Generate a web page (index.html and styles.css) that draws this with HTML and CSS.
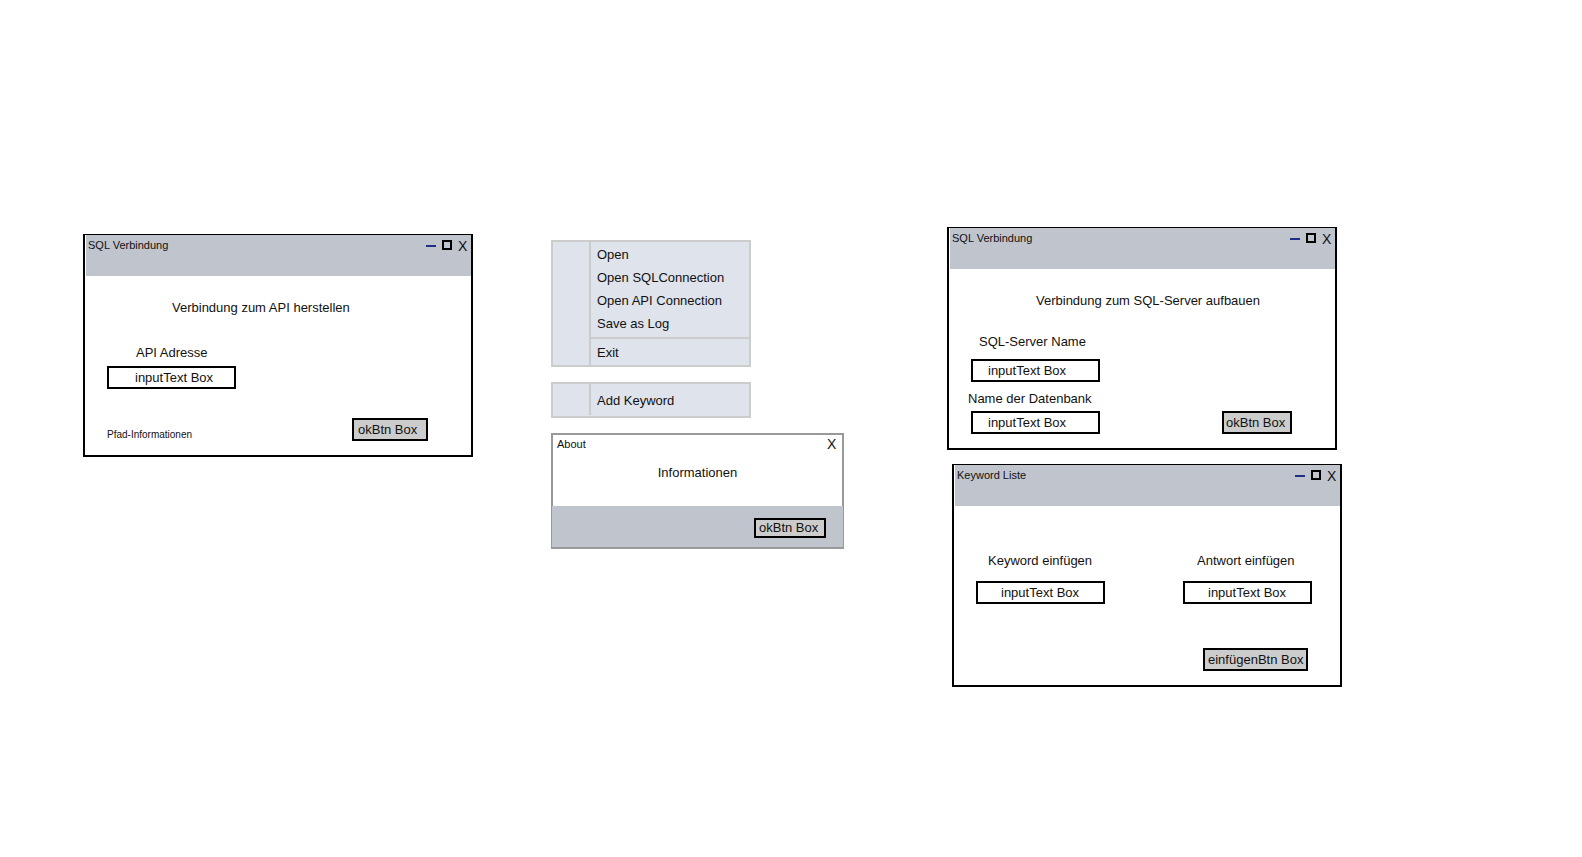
FILE: index.html
```html
<!DOCTYPE html>
<html lang="de">
<head>
<meta charset="utf-8">
<title>Mockups</title>
<link rel="stylesheet" href="styles.css">
</head>
<body>
<main class="canvas">

  <section class="window window-api">
    <header class="titlebar">
      <h2 class="title">SQL Verbindung</h2>
      <div class="controls">
        <button class="control" aria-label="Minimieren"><svg width="10" height="12" viewBox="0 0 10 12"><path d="M0 6H10" stroke="#1d2f86" stroke-width="2"/></svg></button>
        <button class="control" aria-label="Maximieren"><svg width="10" height="12" viewBox="0 0 10 12"><path d="M1 1H9V9H1Z" fill="none" stroke="#000" stroke-width="2"/></svg></button>
        <button class="control close" aria-label="Schließen">X</button>
      </div>
    </header>
    <form class="body">
      <p class="heading">Verbindung zum API herstellen</p>
      <label class="label-api" for="api">API Adresse</label>
      <input class="field" id="api" type="text" value="inputText Box">
      <div class="footer">
        <span class="hint">Pfad-Informationen</span>
        <button class="action" type="button">okBtn Box</button>
      </div>
    </form>
  </section>

  <nav class="menu menu-file">
    <div class="gutter"></div>
    <div class="entries">
      <button class="entry">Open</button>
      <button class="entry">Open SQLConnection</button>
      <button class="entry">Open API Connection</button>
      <button class="entry">Save as Log</button>
      <hr class="separator">
      <button class="entry">Exit</button>
    </div>
  </nav>

  <nav class="menu menu-keyword">
    <div class="gutter"></div>
    <div class="entries">
      <button class="entry">Add Keyword</button>
    </div>
  </nav>

  <section class="about">
    <header class="about-head">
      <h2 class="title">About</h2>
      <button class="control close" aria-label="Schließen">X</button>
    </header>
    <p class="about-text">Informationen</p>
    <footer class="about-footer">
      <button class="action" type="button">okBtn Box</button>
    </footer>
  </section>

  <section class="window window-sql">
    <header class="titlebar">
      <h2 class="title">SQL Verbindung</h2>
      <div class="controls">
        <button class="control" aria-label="Minimieren"><svg width="10" height="12" viewBox="0 0 10 12"><path d="M0 6H10" stroke="#1d2f86" stroke-width="2"/></svg></button>
        <button class="control" aria-label="Maximieren"><svg width="10" height="12" viewBox="0 0 10 12"><path d="M1 1H9V9H1Z" fill="none" stroke="#000" stroke-width="2"/></svg></button>
        <button class="control close" aria-label="Schließen">X</button>
      </div>
    </header>
    <form class="body">
      <p class="heading">Verbindung zum SQL-Server aufbauen</p>
      <label class="label-server" for="server">SQL-Server Name</label>
      <input class="field" id="server" type="text" value="inputText Box">
      <label class="label-db" for="db">Name der Datenbank</label>
      <div class="footer">
        <input class="field" id="db" type="text" value="inputText Box">
        <button class="action" type="button">okBtn Box</button>
      </div>
    </form>
  </section>

  <section class="window window-list">
    <header class="titlebar">
      <h2 class="title">Keyword Liste</h2>
      <div class="controls">
        <button class="control" aria-label="Minimieren"><svg width="10" height="12" viewBox="0 0 10 12"><path d="M0 6H10" stroke="#1d2f86" stroke-width="2"/></svg></button>
        <button class="control" aria-label="Maximieren"><svg width="10" height="12" viewBox="0 0 10 12"><path d="M1 1H9V9H1Z" fill="none" stroke="#000" stroke-width="2"/></svg></button>
        <button class="control close" aria-label="Schließen">X</button>
      </div>
    </header>
    <form class="body">
      <div class="pair">
        <div class="column">
          <label class="label-keyword" for="keyword">Keyword einfügen</label>
          <input class="field" id="keyword" type="text" value="inputText Box">
        </div>
        <div class="column">
          <label class="label-answer" for="answer">Antwort einfügen</label>
          <input class="field" id="answer" type="text" value="inputText Box">
        </div>
      </div>
      <div class="footer">
        <button class="action" type="button">einfügenBtn Box</button>
      </div>
    </form>
  </section>

</main>
</body>
</html>
```

FILE: styles.css
```css
* {
  box-sizing: border-box;
}

body {
  margin: 0;
  background: #fff;
  color: #111;
  font: 13px/16px "Liberation Sans", Arial, sans-serif;
}

h2,
p {
  margin: 0;
}

button,
input {
  margin: 0;
  padding: 0;
  border: 0;
  border-radius: 0;
  background: none;
  color: inherit;
  font: inherit;
}

.canvas {
  position: relative;
  min-height: 100vh;
}

.window,
.menu,
.about {
  position: absolute;
}

/* windows */

.window {
  width: 390px;
  border: 2px solid #000;
  border-top-width: 1px;
  background: #fff;
}

.window-api {
  left: 83px;
  top: 234px;
}

.window-sql {
  left: 947px;
  top: 227px;
}

.window-list {
  left: 952px;
  top: 464px;
}

.titlebar {
  display: flex;
  justify-content: space-between;
  align-items: flex-start;
  height: 41px;
  margin-left: 1px;
  padding: 2px 4px 0 2px;
  background: #c0c4cc;
}

.title {
  font-size: 11px;
  font-weight: normal;
}

.controls {
  display: flex;
  align-items: center;
  gap: 6px;
  padding-top: 1px;
}

.control svg {
  display: block;
}

.close {
  width: 9px;
  font-size: 14px;
}

.body {
  display: flex;
  flex-direction: column;
  align-items: flex-start;
  padding: 24px 43px 14px 22px;
}

.heading {
  margin-left: 65px;
}

.field {
  width: 129px;
  height: 23px;
  border: 2px solid #000;
  background: #fff;
}

.footer {
  display: flex;
  align-self: stretch;
  align-items: center;
  justify-content: space-between;
}

.hint {
  align-self: flex-end;
  font-size: 10px;
  line-height: 12px;
}

.action {
  height: 23px;
  padding-left: 4px;
  border: 2px solid #000;
  background: #ccc;
  text-align: left;
}

.window-api .action {
  width: 76px;
}

.label-api {
  margin: 29px 0 5px 29px;
}

.window-api .field {
  margin-bottom: 29px;
  padding-left: 26px;
}

.window-sql .action {
  width: 70px;
  padding-left: 2px;
}

.window-sql .field {
  padding-left: 15px;
}

.label-server {
  margin: 25px 0 9px 8px;
}

.label-db {
  margin: 9px 0 4px -3px;
}

.window-list .body {
  padding: 47px 28px 14px 22px;
}

.pair {
  display: flex;
  align-self: stretch;
  justify-content: space-between;
  margin-bottom: 44px;
}

.column {
  display: flex;
  flex-direction: column;
  gap: 12px;
}

.label-keyword {
  margin-left: 12px;
}

.label-answer {
  margin-left: 14px;
}

.window-list .field {
  padding-left: 23px;
}

.window-list .footer {
  justify-content: flex-end;
  padding-right: 4px;
}

.window-list .action {
  width: 105px;
  padding-left: 3px;
}

/* menus */

.menu {
  display: flex;
  width: 200px;
  border: 2px solid #ccc;
  background: #dfe3ec;
}

.menu-file {
  left: 551px;
  top: 240px;
}

.menu-keyword {
  left: 551px;
  top: 382px;
  padding-bottom: 1px;
}

.gutter {
  width: 38px;
  border-right: 2px solid #ccc;
}

.entries {
  flex: 1;
  padding: 1px 0;
}

.menu-keyword .entries {
  padding: 5px 0 3px;
}

.entry {
  display: block;
  width: 100%;
  height: 23px;
  padding-left: 6px;
  text-align: left;
}

.separator {
  height: 2px;
  margin: 2px 0;
  border: 0;
  background: #ccc;
}

/* about dialog */

.about {
  left: 551px;
  top: 433px;
  width: 293px;
  border: 2px solid #999;
  background: #fff;
}

.about-head {
  display: flex;
  justify-content: space-between;
  padding: 1px 6px 0 4px;
}

.about-text {
  padding: 13px 0 25px;
  text-align: center;
}

.about-footer {
  display: flex;
  justify-content: flex-end;
  margin: 0 -1px;
  padding: 12px 17px 9px;
  background: #c0c4cc;
}

.about-footer .action {
  width: 72px;
  height: 20px;
  padding-left: 3px;
}
```
